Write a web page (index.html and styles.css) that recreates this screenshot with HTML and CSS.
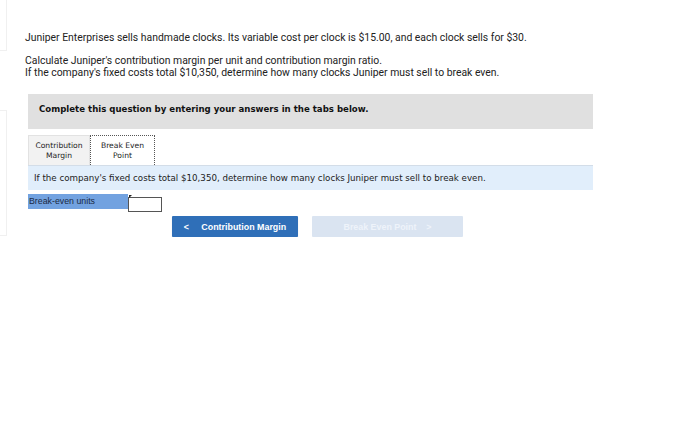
FILE: index.html
```html
<!DOCTYPE html>
<html lang="en">

<head>
  <meta charset="UTF-8" />
  <meta name="viewport" content="width=device-width, initial-scale=1.0" />
  <title>Break Even Point</title>
  <link rel="stylesheet" href="styles.css">
</head>

<body>

  <!-- bordas da coluna lateral -->
  <div class="lado lado-topo"></div>
  <div class="lado lado-meio"></div>

  <div class="enunciado">
    <p>Juniper Enterprises sells handmade clocks. Its variable cost per clock is $15.00, and each clock sells for $30.</p>
    <p>Calculate Juniper's contribution margin per unit and contribution margin ratio.<br />
      If the company's fixed costs total $10,350, determine how many clocks Juniper must sell to break even.</p>
  </div>

  <div class="questao">
    <div class="instrucao">Complete this question by entering your answers in the tabs below.</div>

    <div class="abas">
      <button class="aba">Contribution<br />Margin</button>
      <button class="aba ativa">Break Even<br />Point</button>
    </div>

    <div class="pergunta">If the company's fixed costs total $10,350, determine how many clocks Juniper must sell to break even.</div>

    <div class="resposta">
      <span class="rotulo">Break-even units</span>
      <span class="campo"><input type="text" /></span>
    </div>

    <div class="navegacao">
      <button class="nav-btn voltar">&lt;&nbsp;&nbsp;&nbsp;&nbsp;&nbsp;Contribution Margin</button>
      <button class="nav-btn avancar" disabled>Break Even Point&nbsp;&nbsp;&nbsp;&nbsp;&gt;</button>
    </div>
  </div>

</body>

</html>
```

FILE: styles.css
```css
body {
  font-family: Roboto, sans-serif;
  margin: 0;
  padding: 0 0 0 25px;
  background: #fff;
  color: #222;
  position: relative;
}

.lado {
  position: absolute;
  left: -1px;
  width: 7px;
  border: 1px solid #f0f0f0;
  border-left: none;
}

.lado-topo {
  top: -1px;
  height: 50px;
}

.lado-meio {
  top: 110px;
  height: 124px;
}

.enunciado {
  padding-top: 32px;
  font-size: 10.4px;
  line-height: 12px;
}

.enunciado p {
  margin: 0 0 11px 0;
}

.questao {
  width: 565px;
  margin-left: 3px;
  margin-top: 15px;
  font-family: "DejaVu Sans", Verdana, sans-serif;
}

.instrucao {
  background: #e0e0e0;
  font-size: 8.6px;
  font-weight: bold;
  color: #111;
  padding: 10px 11px 0 11px;
  box-sizing: border-box;
  height: 35px;
  line-height: 10px;
}

.abas {
  display: flex;
  margin-top: 6px;
}

.aba {
  font-family: "DejaVu Sans", Verdana, sans-serif;
  font-size: 7.6px;
  line-height: 10px;
  color: #222;
  background: #f2f2f2;
  border: 1px solid #e2e2e2;
  border-bottom: none;
  padding: 4px 5px 3px 5px;
  height: 30px;
  width: 62px;
  text-align: center;
}

.aba.ativa {
  background: #fff;
  border: 1px dotted #555;
  border-bottom: none;
  width: 65px;
}

.pergunta {
  background: #e1eefb;
  border-top: 1px solid #d3dde8;
  font-size: 8.7px;
  color: #222;
  height: 24px;
  line-height: 24px;
  padding-left: 6px;
}

.resposta {
  display: flex;
  margin-top: 4px;
  height: 15px;
}

.rotulo {
  font-family: "Liberation Sans", Arial, sans-serif;
  background: #72a2e0;
  color: #1b2a44;
  font-size: 8.8px;
  line-height: 15px;
  width: 99px;
  padding-left: 1px;
}

.campo {
  position: relative;
}

.campo::before {
  content: "";
  position: absolute;
  top: 1px;
  left: 1px;
  border-top: 3px solid #222;
  border-right: 3px solid transparent;
}

.campo input {
  width: 34px;
  height: 15px;
  box-sizing: border-box;
  border: 1px solid #555;
  padding: 0;
  margin: 0;
}

.navegacao {
  display: flex;
  gap: 14px;
  margin: 7px 0 0 144px;
}

.nav-btn {
  font-family: "Liberation Sans", Arial, sans-serif;
  font-weight: bold;
  font-size: 8.9px;
  color: #fff;
  border: none;
  border-radius: 1px;
  height: 21px;
  padding: 0;
}

.voltar {
  background: #2f6fb8;
  width: 126px;
  box-shadow: 0 1px 1px rgba(0, 0, 0, 0.2);
}

.avancar {
  background: #dae4f1;
  color: #eef3fa;
  width: 151px;
}
```
